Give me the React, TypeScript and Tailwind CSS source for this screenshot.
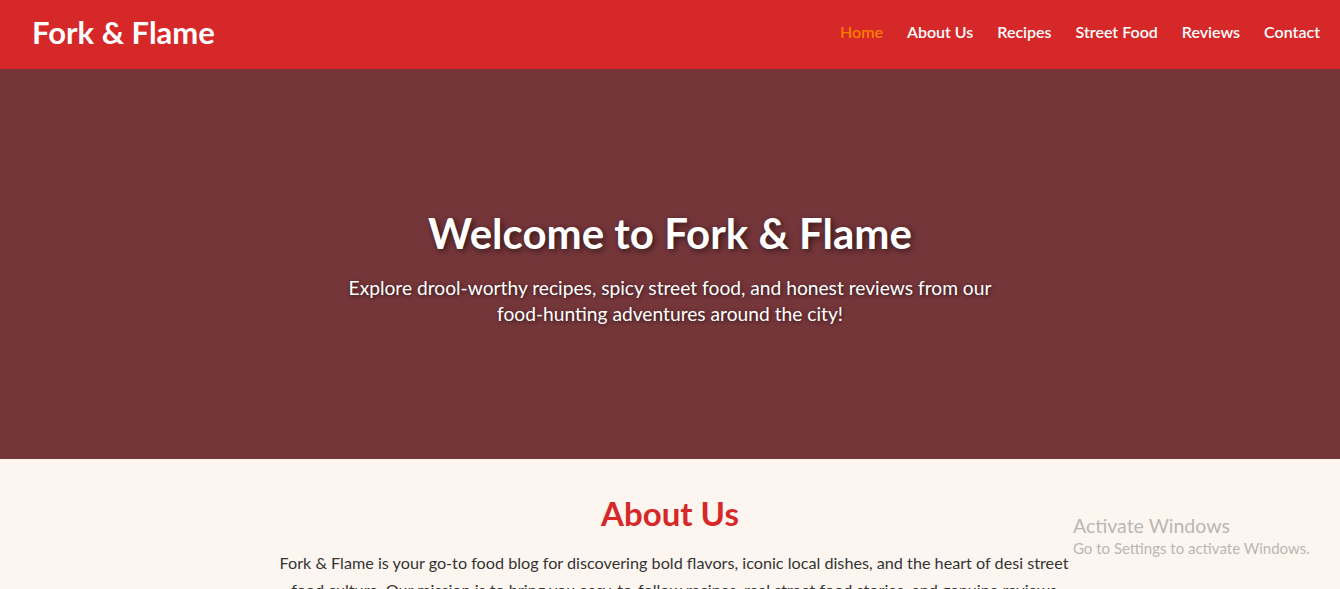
import React from 'react';

const navLinks = ['Home', 'About Us', 'Recipes', 'Street Food', 'Reviews', 'Contact'];

const App = () => {
  return (
    <div className="min-h-screen bg-[#fdf6f0] font-['Lato','Open_Sans',sans-serif] text-[#333]">
      {/* Header */}
      <header className="flex h-[69px] items-center justify-between bg-[#d62828] pb-[5px] pl-8 pr-5">
        <h1 className="text-[31px] font-bold text-white">Fork &amp; Flame</h1>
        <nav>
          <ul className="flex gap-6">
            {navLinks.map((link, i) => (
              <li key={link}>
                <a
                  href="#"
                  className={`text-[16px] font-semibold ${i === 0 ? 'text-[#f77f00]' : 'text-white'}`}
                >
                  {link}
                </a>
              </li>
            ))}
          </ul>
        </nav>
      </header>

      {/* Hero */}
      <section className="flex h-[390px] flex-col items-center justify-center bg-[#75363a] px-4 pt-[6px] text-center text-white">
        <h2 className="text-[42px] font-bold leading-tight [text-shadow:2px_2px_6px_rgba(0,0,0,0.6)]">
          Welcome to Fork &amp; Flame
        </h2>
        <p className="mt-4 max-w-[660px] text-[19.2px] leading-[26px] [text-shadow:1px_1px_4px_rgba(0,0,0,0.6)]">
          Explore drool-worthy recipes, spicy street food, and honest reviews from our food-hunting adventures around the city!
        </p>
      </section>

      {/* About */}
      <section className="relative px-4 pt-[30px] text-center">
        <h2 className="text-[33px] font-bold text-[#d62828]">About Us</h2>
        <p className="mx-auto mt-[10px] max-w-[800px] translate-x-[4px] text-[16.2px] leading-[27px]">
          Fork &amp; Flame is your go-to food blog for discovering bold flavors, iconic local dishes, and the heart of desi street food culture. Our mission is to bring you easy-to-follow recipes, real street food stories, and genuine reviews from the places we love to eat.
        </p>

        {/* Windows watermark */}
        <div className="absolute left-[1073px] top-[55px] text-left text-[#b9b6b3]">
          <div className="text-[19.5px] leading-[24px]">Activate Windows</div>
          <div className="text-[15px] leading-[20px]">Go to Settings to activate Windows.</div>
        </div>
      </section>
    </div>
  );
};

export default App;
